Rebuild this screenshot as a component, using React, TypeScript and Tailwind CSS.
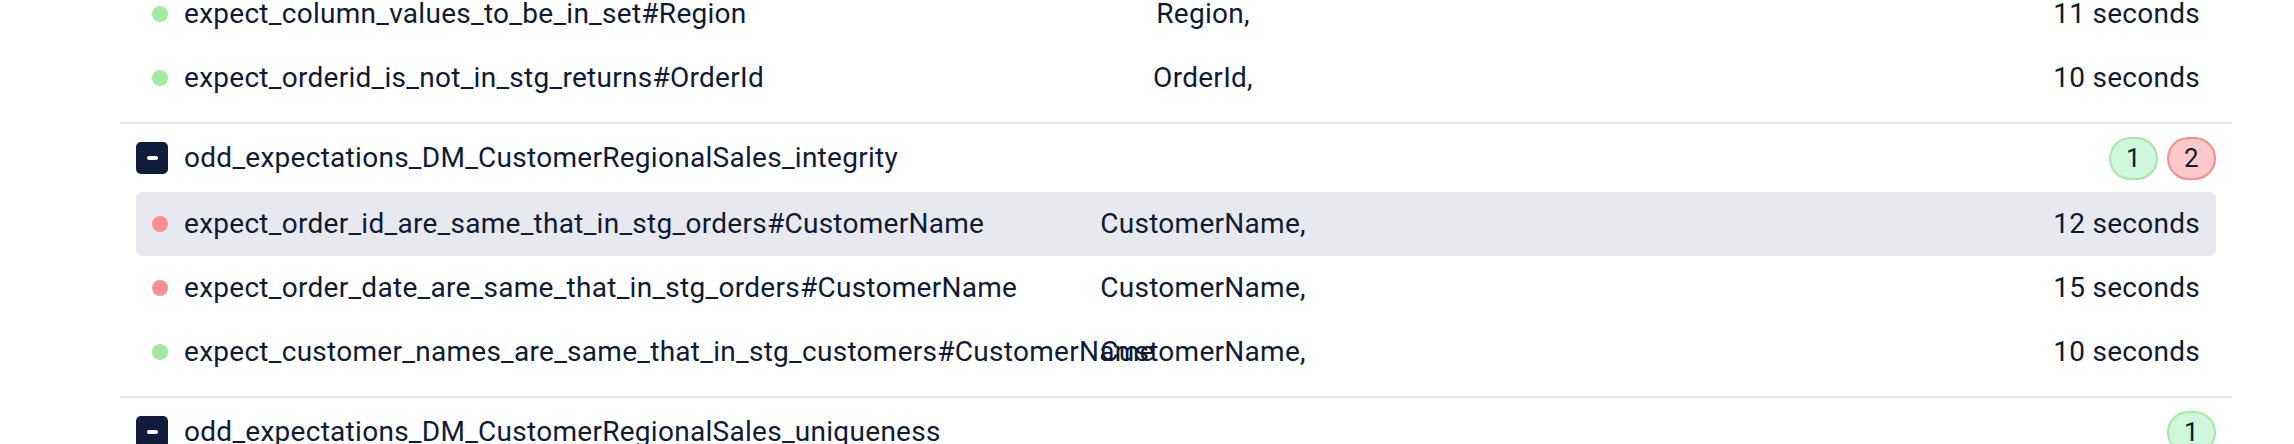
type Status = "success" | "failed";

type Row = { name: string; column: string; duration: string; status: Status; active?: boolean };

type Group = { title: string; passed: number; failed: number; rows: Row[] };

const TOP_ROWS: Row[] = [
  { name: "expect_column_values_to_be_in_set#Region", column: "Region,", duration: "11 seconds", status: "success" },
  { name: "expect_orderid_is_not_in_stg_returns#OrderId", column: "OrderId,", duration: "10 seconds", status: "success" },
];

const GROUPS: Group[] = [
  {
    title: "odd_expectations_DM_CustomerRegionalSales_integrity",
    passed: 1,
    failed: 2,
    rows: [
      {
        name: "expect_order_id_are_same_that_in_stg_orders#CustomerName",
        column: "CustomerName,",
        duration: "12 seconds",
        status: "failed",
        active: true,
      },
      {
        name: "expect_order_date_are_same_that_in_stg_orders#CustomerName",
        column: "CustomerName,",
        duration: "15 seconds",
        status: "failed",
      },
      {
        name: "expect_customer_names_are_same_that_in_stg_customers#CustomerName",
        column: "CustomerName,",
        duration: "10 seconds",
        status: "success",
      },
    ],
  },
  {
    title: "odd_expectations_DM_CustomerRegionalSales_uniqueness",
    passed: 1,
    failed: 0,
    rows: [],
  },
];

function TestRow({ row }: { row: Row }) {
  return (
    <div
      className={`mx-4 flex h-16 items-center rounded-md px-4 ${row.active ? "bg-[#e8e9ee]" : ""}`}
    >
      <span
        className={`h-4 w-4 shrink-0 rounded-full ${row.status === "success" ? "bg-[#a4e9a2]" : "bg-[#fb8e8e]"}`}
      />
      <div className="ml-4 w-[819px] shrink-0 whitespace-nowrap">{row.name}</div>
      <div className="w-[400px] shrink-0 whitespace-nowrap text-center">{row.column}</div>
      <div className="flex-1 whitespace-nowrap text-right">{row.duration}</div>
    </div>
  );
}

function CountBadge({ value, kind }: { value: number; kind: Status }) {
  return (
    <span
      className={`flex h-[43px] w-[49px] items-center justify-center rounded-full border-2 text-[26px] ${
        kind === "success" ? "border-[#a6e8a8] bg-[#cff7dc]" : "border-[#f88d8d] bg-[#fec9c9]"
      }`}
    >
      {value}
    </span>
  );
}

export default function App() {
  return (
    <div
      className="h-[444px] w-[2294px] overflow-hidden bg-white text-[28px] tracking-[0.01em] text-[#0f1a36]"
      style={{ fontFamily: "Roboto, 'Noto Sans', sans-serif" }}
    >
      <div className="-mt-[18px] ml-[120px] w-[2112px]">
        {/* tail of the previous suite, scrolled partly out of view */}
        <div className="pb-3">
          {TOP_ROWS.map((r) => (
            <TestRow key={r.name} row={r} />
          ))}
        </div>

        {GROUPS.map((g) => (
          <div key={g.title} className="border-t-2 border-[#e6e6ec] pb-3">
            <div className="mx-4 flex h-[68px] items-center">
              <button className="flex h-8 w-8 shrink-0 items-center justify-center rounded-[5px] bg-[#0f1c3b]">
                <span className="h-1 w-[11px] rounded-full bg-white" />
              </button>
              <div className="ml-4 flex-1 whitespace-nowrap">{g.title}</div>
              <div className="flex gap-[9px]">
                {g.passed > 0 && <CountBadge value={g.passed} kind="success" />}
                {g.failed > 0 && <CountBadge value={g.failed} kind="failed" />}
              </div>
            </div>
            {g.rows.map((r) => (
              <TestRow key={r.name} row={r} />
            ))}
          </div>
        ))}
      </div>
    </div>
  );
}
